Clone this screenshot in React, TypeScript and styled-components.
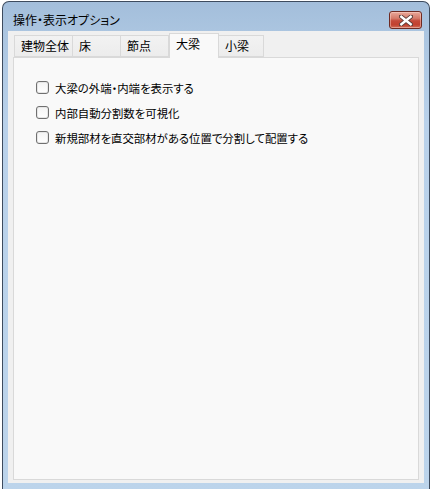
import React, { useState } from "react";
import styled, { createGlobalStyle } from "styled-components";

const Global = createGlobalStyle`
  html, body { margin: 0; padding: 0; background: #ffffff; overflow: hidden; }
  body { font-family: "Noto Sans CJK JP", "Noto Sans", sans-serif; }
`;

const Window = styled.div`
  margin: 1px 0 0 2px;
  width: 428px;
  height: 500px;
  box-sizing: border-box;
  border: 1px solid #3d4b5e;
  border-bottom: none;
  border-radius: 7px 7px 0 0;
  background: linear-gradient(180deg, #a3bedb 0px, #abc5e0 30px, #b9d1ea 120px, #bcd4eb 100%);
  padding: 0 5px;
  display: flex;
  flex-direction: column;
`;

const TitleBar = styled.div`
  height: 29px;
  display: flex;
  align-items: flex-start;
  justify-content: space-between;
  flex-shrink: 0;
`;

const Title = styled.div`
  padding: 10px 0 0 5px;
  font-size: 12px;
  line-height: 16px;
  color: #000;
  font-feature-settings: "palt";
`;

const CloseButton = styled.div`
  margin: 9px 2px 0 0;
  width: 31px;
  height: 16px;
  border: 1px solid #6e2a22;
  border-radius: 3px;
  background: linear-gradient(180deg, #e9a99b 0%, #d57a69 40%, #c4493a 55%, #c2412f 80%, #d0705c 100%);
  box-shadow: inset 0 0 0 1px rgba(255, 220, 210, 0.45);
  display: flex;
  align-items: center;
  justify-content: center;
`;

const Client = styled.div`
  height: 452px;
  background: #f0f0f0;
  padding: 2px 5px 0 5px;
  box-sizing: border-box;
  display: flex;
  flex-direction: column;
`;

const TabRow = styled.div`
  display: flex;
  align-items: flex-end;
  height: 24px;
  padding-left: 1px;
  position: relative;
  z-index: 1;
`;

const Tab = styled.div<{ $w: number; $selected?: boolean }>`
  width: ${(p) => p.$w}px;
  box-sizing: border-box;
  height: ${(p) => (p.$selected ? 25 : 22)}px;
  margin-bottom: ${(p) => (p.$selected ? "-1px" : "0")};
  position: relative;
  z-index: ${(p) => (p.$selected ? 2 : 1)};
  border: 1px solid #d9d9d9;
  border-bottom: ${(p) => (p.$selected ? "none" : "1px solid #d9d9d9")};
  border-left: ${(p) => (p.$selected ? "1px solid #d9d9d9" : "none")};
  background: ${(p) => (p.$selected ? "#f9f9f9" : "linear-gradient(180deg, #f2f2f2, #ececec)")};
  padding: ${(p) => (p.$selected ? "2px 0 0 6px" : "2px 0 0 6px")};
  font-size: 12px;
  line-height: 16px;
  color: #000;
  white-space: nowrap;
  &:first-child {
    border-left: 1px solid #d9d9d9;
  }
`;

const Panel = styled.div`
  height: 423px;
  box-sizing: border-box;
  border: 1px solid #d9d9d9;
  background: #f9f9f9;
  padding: 23px 0 0 22px;
  display: flex;
  flex-direction: column;
  gap: 12px;
`;

const Row = styled.label`
  display: flex;
  align-items: center;
  gap: 6px;
  height: 13px;
  font-size: 11.4px;
  color: #000;
  font-feature-settings: "palt";
  white-space: nowrap;
`;

const Box = styled.span`
  width: 13px;
  height: 13px;
  box-sizing: border-box;
  border: 1px solid #707070;
  border-radius: 3px;
  background: linear-gradient(180deg, #f4f4f4, #ffffff);
  box-shadow: inset 0 0 0 1px #e6e6e6;
  flex-shrink: 0;
`;

const RowText = styled.span`
  line-height: 16px;
`;

const tabs = [
  { label: "建物全体", w: 59 },
  { label: "床", w: 48 },
  { label: "節点", w: 48 },
  { label: "大梁", w: 50, selected: true },
  { label: "小梁", w: 45 },
];

const options = [
  "大梁の外端・内端を表示する",
  "内部自動分割数を可視化",
  "新規部材を直交部材がある位置で分割して配置する",
];

function CloseX() {
  return (
    <svg width="14" height="11" viewBox="0 0 14 11">
      <path
        d="M2 1.5 L12 9.5 M12 1.5 L2 9.5"
        stroke="#5a3a36"
        strokeWidth="4.2"
        strokeLinecap="square"
        fill="none"
      />
      <path
        d="M2.3 1.8 L11.7 9.2 M11.7 1.8 L2.3 9.2"
        stroke="#ffffff"
        strokeWidth="2.4"
        strokeLinecap="square"
        fill="none"
      />
    </svg>
  );
}

export default function App() {
  const [checked] = useState([false, false, false]);
  return (
    <>
      <Global />
      <Window>
        <TitleBar>
          <Title>操作・表示オプション</Title>
          <CloseButton>
            <CloseX />
          </CloseButton>
        </TitleBar>
        <Client>
          <TabRow>
            {tabs.map((t) => (
              <Tab key={t.label} $w={t.w} $selected={t.selected}>
                {t.label}
              </Tab>
            ))}
          </TabRow>
          <Panel>
            {options.map((o, i) => (
              <Row key={o}>
                <Box data-checked={checked[i]} />
                <RowText>{o}</RowText>
              </Row>
            ))}
          </Panel>
        </Client>
      </Window>
    </>
  );
}
